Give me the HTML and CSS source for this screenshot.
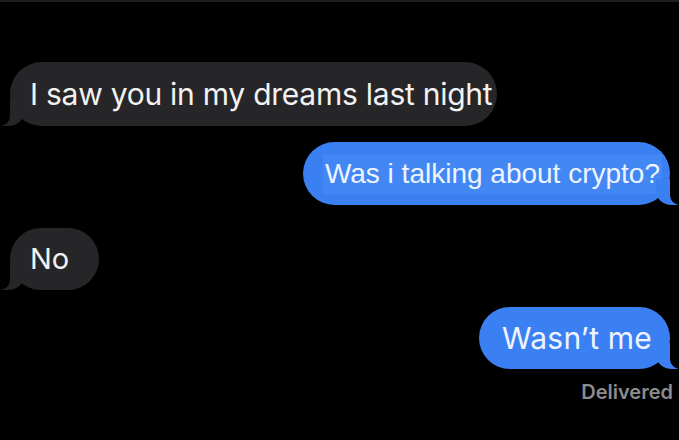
FILE: index.html
```html
<!DOCTYPE html>
<html lang="en">
<head>
    <meta charset="UTF-8">
    <meta name="viewport" content="width=device-width, initial-scale=1.0">
    <title>Messages</title>
    <link rel="stylesheet" href="styles.css">
</head>
<body>
    <div class="thread">
        <!-- received -->
        <div class="bubble received first">I saw you in my dreams last night</div>

        <!-- sent -->
        <div class="bubble sent edited"><span class="patch">Was i talking about crypto?</span></div>

        <div class="bubble received short">No</div>

        <div class="bubble sent last">Wasn&rsquo;t me</div>

        <div class="status">Delivered</div>
    </div>
</body>
</html>
```

FILE: styles.css
```css
* {
    margin: 0;
    padding: 0;
    box-sizing: border-box;
}

body {
    background-color: #000;
    border-top: 2px solid #1e1e1e;
    height: 440px;
    overflow: hidden;
    font-family: 'Inter', 'Noto Sans', sans-serif;
}

.thread {
    display: flex;
    flex-direction: column;
    padding: 60px 9px 0 10px;
}

.bubble {
    position: relative;
    height: 64px;
    line-height: 64px;
    font-size: 29px;
    border-radius: 32px;
    white-space: nowrap;
}

.received {
    align-self: flex-start;
    background-color: #262628;
    color: #f2f2f2;
    padding: 0 22px 0 20px;
}

.sent {
    align-self: flex-end;
    background-color: #3b80f3;
    color: #eef4ff;
    padding: 0 22px;
}

/* tails */
.bubble::before,
.bubble::after {
    content: "";
    position: absolute;
    bottom: 0;
    height: 26px;
}

.received::before {
    left: -8px;
    width: 22px;
    background-color: #262628;
    border-bottom-right-radius: 16px 14px;
}

.received::after {
    left: -26px;
    width: 26px;
    background-color: #000;
    border-bottom-right-radius: 10px;
}

.sent::before {
    right: -8px;
    width: 22px;
    background-color: #3b80f3;
    border-bottom-left-radius: 16px 14px;
}

.sent::after {
    right: -26px;
    width: 26px;
    background-color: #000;
    border-bottom-left-radius: 10px;
}

.first {
    font-size: 30px;
    letter-spacing: -0.25px;
    padding-right: 5px;
}

.edited {
    margin-top: 16px;
    height: 63px;
    padding: 0 8px 0 20px;
    font-family: 'Liberation Sans', Arial, sans-serif;
    font-size: 28px;
    line-height: 63px;
}

.patch {
    display: inline-block;
    line-height: 40px;
    padding: 0 2px;
    background-color: #4287f4;
}

.short {
    margin-top: 23px;
    height: 62px;
    line-height: 62px;
    padding: 0 30px 0 20px;
}

.last {
    margin-top: 17px;
    height: 62px;
    line-height: 62px;
    font-size: 30px;
    letter-spacing: 0.2px;
    padding: 0 18px 0 23px;
}

.status {
    align-self: flex-end;
    margin-top: 11px;
    margin-right: -3px;
    font-size: 20px;
    font-weight: 600;
    color: #8c8c90;
}
```
